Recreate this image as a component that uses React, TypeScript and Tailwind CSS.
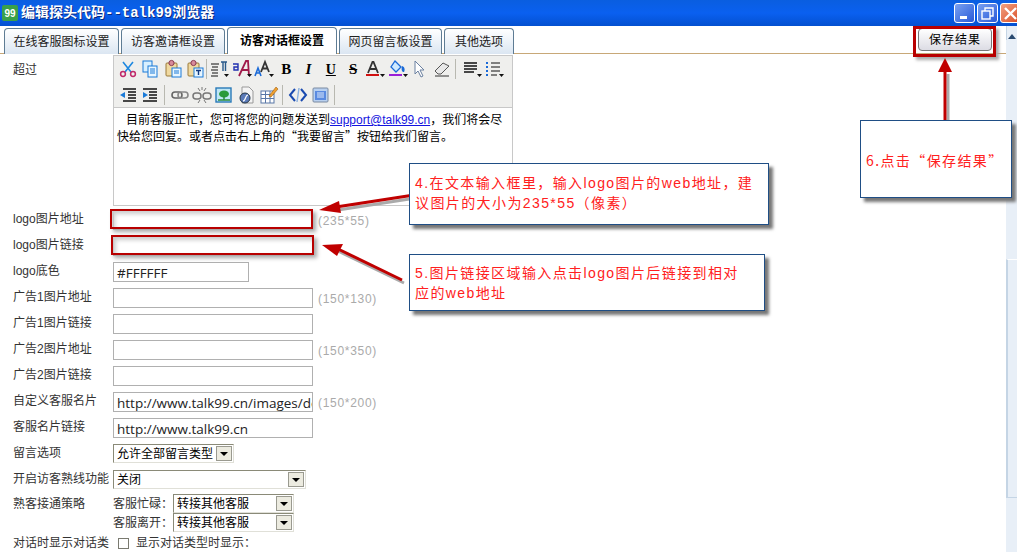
import type { ReactNode } from 'react'

const cjk = '[font-family:"Liberation_Sans","Noto_Sans_CJK_SC",sans-serif]'

const Svg = ({ children }: { children: ReactNode }) => (
  <svg width="20" height="20" viewBox="0 0 20 20" fill="none">
    {children}
  </svg>
)

const Drop = () => <path d="M15 15h5l-2.5 3z" fill="#111" />

const paste = (
  <>
    <rect x="3" y="4" width="11" height="13" rx="1" fill="#f0d9a0" stroke="#9a7a3a" />
    <circle cx="8.5" cy="4" r="2.6" fill="#d88a9a" stroke="#8a3a50" />
  </>
)

const icons: Record<string, ReactNode> = {
  cut: (
    <Svg>
      <path d="M5 3l8 10M15 3L7 13" stroke="#1e88e0" strokeWidth="1.6" />
      <circle cx="5" cy="15" r="2.4" stroke="#c02a6a" strokeWidth="1.5" />
      <circle cx="15" cy="15" r="2.4" stroke="#c02a6a" strokeWidth="1.5" />
    </Svg>
  ),
  copy: (
    <Svg>
      <rect x="3" y="2" width="9" height="11" fill="#d8f0ff" stroke="#1a7ad8" />
      <rect x="8" y="7" width="9" height="11" fill="#e8f6ff" stroke="#1a7ad8" />
      <path d="M10 10h5M10 12h5M10 14h5" stroke="#1a7ad8" />
    </Svg>
  ),
  paste: (
    <Svg>
      {paste}
      <rect x="9" y="9" width="9" height="9" fill="#e8f6ff" stroke="#1a7ad8" />
      <path d="M11 12h5M11 14h5" stroke="#1a7ad8" />
    </Svg>
  ),
  pasteText: (
    <Svg>
      {paste}
      <rect x="9" y="9" width="9" height="9" fill="#e8f6ff" stroke="#1a7ad8" />
      <path d="M11 11.5h5M13.5 11.5V16" stroke="#123a80" strokeWidth="1.4" />
    </Svg>
  ),
  para: (
    <Svg>
      <path d="M2 5h8M3 8h6M2 11h7M3 14h6M2 17h7" stroke="#111" />
      <path d="M12 3h6M14 3v9M16.5 3v9" stroke="#2a5a8a" strokeWidth="1.4" />
      <Drop />
    </Svg>
  ),
  style: (
    <Svg>
      <path d="M1 5h5v6H2V8h4" stroke="#2030b0" strokeWidth="1.4" />
      <path d="M7 17L14 2h2l1 15M10 11h7" stroke="#a01a4a" strokeWidth="1.8" />
      <Drop />
    </Svg>
  ),
  size: (
    <Svg>
      <path d="M1 17l3-8 3 8M2.5 14h3" stroke="#1a6ad8" strokeWidth="1.6" />
      <path d="M7 13l4-10 4 10M8.5 9.5h5" stroke="#333" strokeWidth="1.8" />
      <Drop />
    </Svg>
  ),
  fore: (
    <Svg>
      <path d="M3 14l4.5-11h1L13 14M5 10h6" stroke="#333" strokeWidth="1.8" />
      <path d="M1 16h13" stroke="#d01010" strokeWidth="2" />
      <Drop />
    </Svg>
  ),
  fill: (
    <Svg>
      <path d="M7 2l6 6-5 5-5-5z" fill="#cfeaff" stroke="#1a6ad8" strokeWidth="1.3" />
      <path d="M14 7c3 1 3 4 2 6-2 0-3-2-2-6z" fill="#1a6ad8" />
      <path d="M1 16h13" stroke="#9a20d8" strokeWidth="2" />
      <Drop />
    </Svg>
  ),
  cursor: (
    <Svg>
      <path d="M5 2v13l3-3 3 6 2-1-3-6h4z" fill="#fff" stroke="#6a80a0" />
    </Svg>
  ),
  eraser: (
    <Svg>
      <path d="M3 12l8-8 6 3-8 8H6z" fill="#e8e8e8" stroke="#555" />
      <path d="M3 17h14" stroke="#333" />
    </Svg>
  ),
  justify: (
    <Svg>
      <path d="M2 4h13M2 7h13M2 10h13M2 13h10" stroke="#111" strokeWidth="1.3" />
      <Drop />
    </Svg>
  ),
  list: (
    <Svg>
      <path d="M7 4h9M7 8h9M7 12h9M7 16h6" stroke="#111" />
      <path d="M3 3v2M3 7v2M3 11v2M3 15v2" stroke="#1a6ad8" strokeWidth="2" />
      <Drop />
    </Svg>
  ),
  outdent: (
    <Svg>
      <path d="M5 4h13M10 7h8M10 10h8M10 13h8M5 16h13" stroke="#111" strokeWidth="1.3" />
      <path d="M2 10l5-3v6z" fill="#1a7ad8" />
    </Svg>
  ),
  indent: (
    <Svg>
      <path d="M3 4h14M9 7h8M9 10h8M9 13h8M3 16h14" stroke="#111" strokeWidth="1.3" />
      <path d="M8 10L3 7v6z" fill="#1a7ad8" />
    </Svg>
  ),
  link: (
    <Svg>
      <rect x="2" y="7" width="10" height="6" rx="3" stroke="#666" strokeWidth="1.6" />
      <rect x="8" y="7" width="10" height="6" rx="3" stroke="#888" strokeWidth="1.6" />
    </Svg>
  ),
  unlink: (
    <Svg>
      <rect x="1" y="8" width="8" height="6" rx="3" stroke="#777" strokeWidth="1.5" />
      <rect x="11" y="8" width="8" height="6" rx="3" stroke="#777" strokeWidth="1.5" />
      <path d="M6 3l2 3M14 3l-2 3M10 2v3M6 18l2-3M14 18l-2-3" stroke="#777" />
    </Svg>
  ),
  image: (
    <Svg>
      <rect x="2" y="3" width="15" height="14" fill="#bfe6f5" stroke="#2a7ab8" strokeWidth="1.4" />
      <ellipse cx="10" cy="9" rx="5" ry="3.5" fill="#2a9a3a" />
      <path d="M10 11v4M4 15h12" stroke="#2a8a3a" strokeWidth="1.5" />
    </Svg>
  ),
  flash: (
    <Svg>
      <path d="M5 2h7l4 4v12H5z" fill="#f4f4f4" stroke="#999" />
      <circle cx="8" cy="13" r="5" fill="#5a7ab8" stroke="#234" />
      <path d="M6 16c3 0 2-6 5-6" stroke="#fff" strokeWidth="1.2" />
    </Svg>
  ),
  table: (
    <Svg>
      <rect x="2" y="6" width="13" height="12" fill="#fff" stroke="#5a78a8" />
      <path d="M2 9.5h13M2 13.5h13M6.5 6v12M11 6v12" stroke="#5a78a8" />
      <path d="M10 11l7-9 2 2-7 8z" fill="#f0a030" stroke="#a06010" strokeWidth="0.6" />
    </Svg>
  ),
  code: (
    <Svg>
      <path d="M7 4l-5 6 5 6" stroke="#1a4ab0" strokeWidth="2" />
      <path d="M13 4l5 6-5 6" stroke="#1a4ab0" strokeWidth="2" />
      <path d="M11 3l-2 14" stroke="#8ab0e0" strokeWidth="1.4" />
    </Svg>
  ),
  panel: (
    <Svg>
      <rect x="2" y="3" width="15" height="14" rx="1" fill="#b8d0f0" stroke="#7a8aa0" />
      <rect x="4" y="6" width="11" height="9" fill="#5a8ae0" />
      <path d="M6 8h7M6 10h7M6 12h7" stroke="#dce8fa" />
    </Svg>
  ),
  bold: <span className="font-['Liberation_Serif',serif] text-[15px] font-bold text-black">B</span>,
  italic: <span className="font-['Liberation_Serif',serif] text-[15px] font-bold italic text-black">I</span>,
  underline: <span className="font-['Liberation_Serif',serif] text-[14px] font-bold text-black underline">U</span>,
  strike: <span className="font-['Liberation_Serif',serif] text-[15px] font-bold text-black line-through">S</span>,
}

const ToolButton = ({ name }: { name: string }) => (
  <div className="flex h-[22px] w-[22.3px] shrink-0 items-center justify-center">{icons[name]}</div>
)

const Sep = ({ wide }: { wide?: boolean }) => (
  <div className={`${wide ? 'mx-[2px] w-[3px]' : 'w-[2px]'} h-[20px] shrink-0 border-l border-[#b8b8b0]`} />
)

const Toolbar = () => (
  <div className="h-[52px] border-b border-[#c8c8c8] bg-[#efefed] pl-[3px] pt-[2px]">
    <div className="flex h-[22px] items-center">
      {['cut', 'copy', 'paste', 'pasteText'].map((n) => <ToolButton key={n} name={n} />)}
      <Sep />
      {['para', 'style', 'size', 'bold', 'italic', 'underline', 'strike', 'fore', 'fill', 'cursor', 'eraser'].map((n) => <ToolButton key={n} name={n} />)}
      <Sep wide />
      {['justify', 'list'].map((n) => <ToolButton key={n} name={n} />)}
    </div>
    <div className="mt-[4px] flex h-[22px] items-center">
      {['outdent', 'indent'].map((n) => <ToolButton key={n} name={n} />)}
      <Sep wide />
      {['link', 'unlink', 'image', 'flash', 'table'].map((n) => <ToolButton key={n} name={n} />)}
      <Sep wide />
      {['code', 'panel'].map((n) => <ToolButton key={n} name={n} />)}
      <Sep wide />
    </div>
  </div>
)

const tabs = [
  { label: '在线客服图标设置', w: 'w-[115px]' },
  { label: '访客邀请框设置', w: 'w-[104px]' },
  { label: '访客对话框设置', w: 'w-[110px]', active: true },
  { label: '网页留言板设置', w: 'w-[103px]' },
  { label: '其他选项', w: 'w-[70px]' },
]

const Tab = ({ label, w, active }: { label: string; w: string; active?: boolean }) => (
  <div
    className={`${w} flex items-center justify-center rounded-t-[4px] border border-b-0 border-[#5e7c94] text-[12px] ${
      active
        ? 'relative z-10 h-[27px] bg-white font-bold text-black'
        : 'h-[26px] bg-gradient-to-b from-white to-[#dbe6f2] text-[#222]'
    }`}
  >
    {label}
  </div>
)

const Row = ({ label, children }: { label: string; children: ReactNode }) => (
  <div className="flex h-[26px] items-start">
    <div className="w-[113px] shrink-0 pl-[13px] pt-[1px] text-[12px] leading-[16px] whitespace-nowrap text-[#333]">{label}</div>
    {children}
  </div>
)

const Input = ({ value, wide = true, hint }: { value?: string; wide?: boolean; hint?: string }) => (
  <>
    <div
      className={`${wide ? 'w-[200px]' : 'w-[136px]'} h-[20px] overflow-hidden border border-[#b0b0b0] bg-white pl-[3px] font-['Open_Sans',sans-serif] text-[13.5px] leading-[20px] whitespace-nowrap text-[#222]`}
    >
      {value}
    </div>
    {hint && <span className="ml-[5px] pt-[3px] text-[12px] leading-[16px] tracking-[0.7px] text-[#aaa]">{hint}</span>}
  </>
)

const Select = ({ value, w }: { value: string; w: string }) => (
  <div className={`${w} flex h-[19px] items-center justify-between border border-[#8a8a78] border-r-[#e0e0d8] border-b-[#e0e0d8] bg-white pl-[3px] pr-[1px] text-[12px] text-black`}>
    <span className="leading-[16px]">{value}</span>
    <span className="flex h-[15px] w-[16px] items-center justify-center border border-[#9a9a90] bg-[#ecebe0]">
      <span className="h-0 w-0 border-x-[4px] border-t-[4px] border-x-transparent border-t-black" />
    </span>
  </div>
)

const Note = ({ className, children }: { className: string; children: ReactNode }) => (
  <div className={`absolute border border-[#1f4e85] bg-white text-[14px] leading-[20px] tracking-[1.4px] text-[#ff2020] shadow-[4px_4px_3px_#777] ${className}`}>
    {children}
  </div>
)

const WinButton = ({ color, children }: { color: string; children: ReactNode }) => (
  <div className={`${color} flex h-[20px] w-[21px] items-center justify-center rounded-[3px] border border-white`}>{children}</div>
)

export default function App() {
  return (
    <div className={`relative flex h-[552px] w-[1017px] flex-col overflow-hidden bg-white ${cjk}`}>
      {/* title bar */}
      <div className="flex h-[26px] shrink-0 items-center bg-gradient-to-b from-[#0a5ee0] via-[#0a60f0] to-[#0450d0] pl-[2px]">
        <div className="flex h-[16px] w-[16px] items-center justify-center rounded-[2px] bg-[#3aa04a] font-['Liberation_Sans',sans-serif] text-[10px] font-bold text-white">99</div>
        <span className="ml-[3px] font-['Liberation_Mono','Noto_Sans_CJK_SC',monospace] text-[14px] font-bold text-white [text-shadow:1px_1px_0_#0a2a80]">编辑探头代码--talk99浏览器</span>
        <div className="-mr-[4px] ml-auto flex gap-[2px]">
          <WinButton color="bg-gradient-to-br from-[#7aa0f0] to-[#2a58d8]">
            <span className="mt-[9px] mr-[3px] h-[3px] w-[7px] bg-white" />
          </WinButton>
          <WinButton color="bg-gradient-to-br from-[#7aa0f0] to-[#2a58d8]">
            <svg width="13" height="13" viewBox="0 0 13 13" fill="none" stroke="#fff" strokeWidth="1.4">
              <rect x="1" y="4" width="8" height="8" />
              <path d="M4 4V1h8v8H9" />
            </svg>
          </WinButton>
          <WinButton color="bg-gradient-to-br from-[#f0a080] to-[#d84a20]">
            <svg width="13" height="13" viewBox="0 0 13 13" fill="none" stroke="#fff" strokeWidth="2.4">
              <path d="M1 1l11 11M12 1L1 12" />
            </svg>
          </WinButton>
        </div>
      </div>

      <div className="flex min-h-0 flex-1">
        <div className="relative w-[1006px] shrink-0">
          {/* tab strip */}
          <div className="flex h-[28px] items-end justify-between border-b border-[#c8a878] pl-[4px]">
            <div className="-mb-px flex items-end gap-[2px]">
              {tabs.map((t) => <Tab key={t.label} {...t} />)}
            </div>
            <div className="mb-[2px] mr-[14px] flex h-[23px] w-[74px] items-center justify-center rounded-[4px] border border-[#777] bg-gradient-to-b from-white to-[#dcdce4] text-[12px] tracking-[1px] text-black">
              保存结果
            </div>
          </div>

          {/* form */}
          <div>
            <div className="flex h-[156px] items-start">
              <div className="w-[113px] shrink-0 pl-[13px] pt-[8px] text-[12px] leading-[16px] text-[#333]">超过</div>
              <div className="mt-px h-[151px] w-[400px] border border-[#c8c8c8]">
                <Toolbar />
                <div className="px-[3px] pt-[4px] text-[12px] leading-[16px] text-black">
                  <span className="ml-[9px]">目前客服正忙，您可将您的问题发送到</span>
                  <span className="text-[#1414e0] underline">support@talk99.cn</span>
                  ，我们将会尽快给您回复。或者点击右上角的
                  <span className="font-['Noto_Sans_CJK_SC',sans-serif]" lang="zh-CN">“我要留言”</span>
                  按钮给我们留言。
                </div>
              </div>
            </div>
            <Row label="logo图片地址"><Input hint="(235*55)" /></Row>
            <Row label="logo图片链接"><Input /></Row>
            <Row label="logo底色"><Input wide={false} value="#FFFFFF" /></Row>
            <Row label="广告1图片地址"><Input hint="(150*130)" /></Row>
            <Row label="广告1图片链接"><Input /></Row>
            <Row label="广告2图片地址"><Input hint="(150*350)" /></Row>
            <Row label="广告2图片链接"><Input /></Row>
            <Row label="自定义客服名片"><Input value="http://www.talk99.cn/images/default" hint="(150*200)" /></Row>
            <Row label="客服名片链接"><Input value="http://www.talk99.cn" /></Row>
            <Row label="留言选项"><Select value="允许全部留言类型" w="w-[121px]" /></Row>
            <Row label="开启访客熟线功能"><Select value="关闭" w="w-[193px]" /></Row>
            <div className="flex h-[38px]">
              <div className="w-[113px] shrink-0 pl-[13px] text-[12px] leading-[16px] text-[#333]">熟客接通策略</div>
              <div className="-mt-[2px] flex flex-col text-[12px] text-[#333]">
                <div className="flex items-center">客服忙碌：<Select value="转接其他客服" w="w-[121px]" /></div>
                <div className="flex items-center">客服离开：<Select value="转接其他客服" w="w-[121px]" /></div>
              </div>
            </div>
            <div className="flex h-[18px] items-center">
              <div className="w-[113px] shrink-0 pl-[13px] text-[12px] whitespace-nowrap text-[#333]">对话时显示对话类</div>
              <span className="ml-[5px] h-[11px] w-[11px] border border-[#7a7a70] bg-white" />
              <span className="ml-[7px] text-[12px] text-[#333]">显示对话类型时显示：</span>
            </div>
          </div>

          {/* red highlight boxes */}
          <div className="absolute left-[913px] top-0 h-[31px] w-[83px] border-[3px] border-[#b80000] shadow-[3px_3px_3px_#aaa]" />
          <div className="absolute left-[110px] top-[183px] h-[20px] w-[203px] border-[2px] border-[#b80000] shadow-[3px_3px_4px_#aaa,inset_3px_3px_4px_#ccc]" />
          <div className="absolute left-[111px] top-[209px] h-[20px] w-[203px] border-[2px] border-[#b80000] shadow-[3px_3px_4px_#aaa,inset_3px_3px_4px_#ccc]" />

          {/* arrows */}
          <svg className="pointer-events-none absolute left-0 top-0" width="1006" height="526" viewBox="0 26 1006 526" fill="none">
            <path d="M945 121V72" stroke="#aaa" strokeWidth="3" transform="translate(3 2)" />
            <path d="M945 121V72" stroke="#c00000" strokeWidth="3" />
            <path d="M945 58l-7 14h14z" fill="#c00000" />
            <path d="M414 195l-78 12" stroke="#aaa" strokeWidth="3" transform="translate(2 3)" />
            <path d="M414 195l-78 12" stroke="#c00000" strokeWidth="3" />
            <path d="M319 210l20-9 2 12z" fill="#c00000" />
            <path d="M402 280l-66-32" stroke="#aaa" strokeWidth="3" transform="translate(2 3)" />
            <path d="M402 280l-66-32" stroke="#c00000" strokeWidth="3" />
            <path d="M322 245l21-1-6 12z" fill="#c00000" />
          </svg>

          {/* callouts */}
          <Note className="left-[409px] top-[137px] h-[62px] w-[360px] px-[5px] pt-[9px]">
            4.在文本输入框里，输入logo图片的web地址，建议图片的大小为235*55（像素）
          </Note>
          <Note className="left-[409px] top-[228px] h-[57px] w-[356px] pl-[5px] pr-[14px] pt-[8px]">
            5.图片链接区域输入点击logo图片后链接到相对应的web地址
          </Note>
          <Note className="left-[860px] top-[94px] h-[78px] w-[152px] pl-[5px] pt-[29px] font-['Noto_Sans_CJK_SC',sans-serif] whitespace-nowrap">
            <span lang="zh-CN">6.点击“保存结果”</span>
          </Note>
        </div>

        {/* scrollbar */}
        <div className="flex w-[11px] shrink-0 flex-col bg-[#e8eff7]">
          <div className="flex h-[14px] items-center justify-center border-l border-[#c5d5e5]">
            <span className="mt-[6px] h-0 w-0 border-x-[4px] border-b-[5px] border-x-transparent border-b-[#2a4a70]" />
          </div>
          <div className="mt-[219px] h-[239px] border-y border-l-2 border-[#c5d5e5] border-t-white bg-[#e8eff7]" />
        </div>
      </div>
    </div>
  )
}
